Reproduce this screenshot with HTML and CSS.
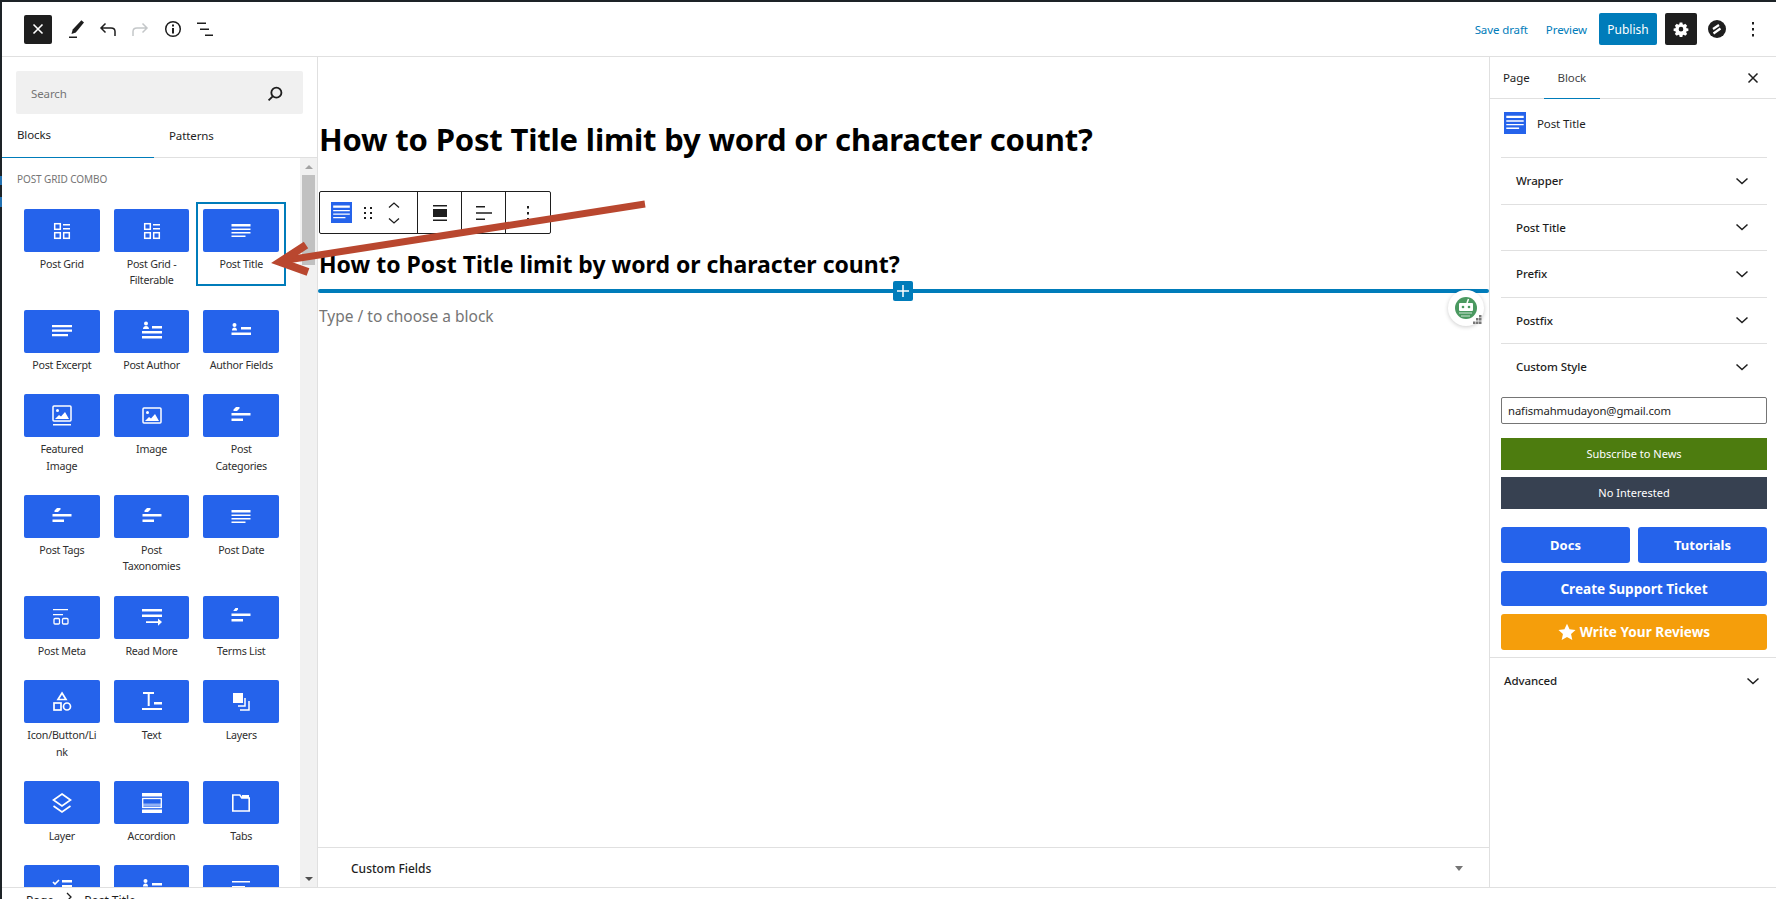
FILE: index.html
```html
<!DOCTYPE html>
<html lang="en">
<head>
  <meta charset="UTF-8" />
  <title>Edit Page</title>
  <link rel="stylesheet" href="styles.css">
</head>
<body>
  <svg class="defs" width="0" height="0">
    <symbol id="i-grid" viewBox="0 0 24 24"><g fill="none" stroke="#fff" stroke-width="1.5"><rect x="4.7" y="4.7" width="5.6" height="5.6"/><rect x="4.7" y="13.7" width="5.6" height="5.6"/><rect x="13.7" y="13.7" width="5.6" height="5.6"/></g><path fill="#fff" d="M13 5h7v1.5h-7zM13 9h7v1.5h-7z"/></symbol>
    <symbol id="i-title" viewBox="0 0 24 24"><path fill="#fff" d="M2.500 5h19v2.500h-19zM2.500 9.500h19v1.500h-19zM2.500 13h19v1.500h-19zM2.500 16.500h14v1.500h-14z"/></symbol>
    <symbol id="i-excerpt" viewBox="0 0 24 24"><path fill="#fff" d="M2 6h20v2.300H2zM2 10.500h20v2.300H2zM2 15h16v2.300H2z"/></symbol>
    <symbol id="i-author" viewBox="0 0 24 24"><circle cx="6" cy="4.500" r="2" fill="#fff"/><path fill="#fff" d="M3 10c0-2 1.500-3 3-3s3 1 3 3zM12 7h10v2.500H12zM2 12h20v2.500H2zM2 17h20v2.500H2z"/></symbol>
    <symbol id="i-fields" viewBox="0 0 24 24"><circle cx="5.500" cy="6" r="2" fill="#fff"/><path fill="#fff" d="M3 11.500c0-2 1-3 2.500-3s2.500 1 2.500 3zM12 8h10v2.500H12zM2.500 13.500h19.500V16H2.500z"/></symbol>
    <symbol id="i-feat" viewBox="0 0 24 24"><rect x="3" y="2" width="18" height="15" rx="1" fill="none" stroke="#fff" stroke-width="1.500"/><circle cx="7.500" cy="6.500" r="1.500" fill="#fff"/><path fill="#fff" d="M5 15l4-4 2 1.500L15 8l4 7zM3 20h18v1.500H3z"/></symbol>
    <symbol id="i-image" viewBox="0 0 24 24"><rect x="3" y="4" width="18" height="15" rx="1" fill="none" stroke="#fff" stroke-width="1.500"/><circle cx="7.500" cy="8.500" r="1.500" fill="#fff"/><path fill="#fff" d="M5 17l4-4 2 1.500L15 10l4 7z"/></symbol>
    <symbol id="i-terms" viewBox="0 0 24 24"><path fill="#fff" d="M4.500 5.500L7 3h3.500v1.500L8 7H4.500zM2.500 9h19v2.500h-19zM2.500 14.500H14V17H2.500z"/></symbol>
    <symbol id="i-meta" viewBox="0 0 24 24"><path fill="#fff" d="M3 4h15v1.300H3zM3 9h10v1.300H3z"/><g fill="none" stroke="#fff" stroke-width="1.300"><rect x="4" y="13.500" width="5.500" height="5.500" rx="1"/><rect x="12.500" y="13.500" width="5.500" height="5.500" rx="1"/></g></symbol>
    <symbol id="i-more" viewBox="0 0 24 24"><path fill="#fff" d="M2 4h20v2.500H2zM2 9.500h20V12H2zM6 16.300h13V18H6z"/><path fill="#fff" d="M18 13.500l4 3.600-4 3.600z"/></symbol>
    <symbol id="i-tlist" viewBox="0 0 24 24"><path fill="#fff" d="M4.500 5.500L6.500 3H9v1.500L7.500 6h-3zM2.500 8.500h19V11h-19zM2.500 14H14v2.500H2.500z"/></symbol>
    <symbol id="i-shapes" viewBox="0 0 24 24"><path fill="none" stroke="#fff" stroke-width="1.700" d="M12 3l4 6.500H8z"/><rect x="4" y="13" width="7" height="7" fill="none" stroke="#fff" stroke-width="1.700"/><circle cx="17" cy="16.500" r="3.500" fill="none" stroke="#fff" stroke-width="1.700"/></symbol>
    <symbol id="i-text" viewBox="0 0 24 24"><path fill="#fff" d="M3 2h11v2H9.700v12H7.700V4H3zM14 12h8v2.500h-8zM2 18h20v2H2z"/></symbol>
    <symbol id="i-layers" viewBox="0 0 24 24"><rect x="4" y="3" width="10" height="10" fill="#fff"/><path fill="none" stroke="#fff" stroke-width="1.500" d="M9 16h7V8M11 20h9V11"/></symbol>
    <symbol id="i-layer" viewBox="0 0 24 24"><path fill="none" stroke="#fff" stroke-width="1.700" d="M12 3l8.500 6-8.500 6-8.500-6zM3.500 15l8.500 6 8.500-6"/></symbol>
    <symbol id="i-accordion" viewBox="0 0 24 24"><path fill="#fff" d="M2 2h20v3.500H2zM2 18.500h20V22H2z"/><rect x="2.700" y="7.500" width="18.600" height="9" fill="none" stroke="#fff" stroke-width="1.300"/><path fill="#fff" fill-opacity=".5" d="M3 12.500h18v3H3z"/></symbol>
    <symbol id="i-tabs" viewBox="0 0 24 24"><path fill="none" stroke="#fff" stroke-width="1.600" d="M3.800 4h7l2 3h7.400v13H3.800z"/><path fill="#fff" d="M13 4h7v3h-7z"/></symbol>
    <symbol id="i-check" viewBox="0 0 24 24"><path fill="none" stroke="#fff" stroke-width="1.700" d="M3 7l2 2 4-4"/><path fill="#fff" d="M12 5h10v2.500H12zM12 10h10v2.500H12z"/><rect x="3.500" y="13" width="5" height="5" fill="none" stroke="#fff" stroke-width="1.300"/></symbol>
    <symbol id="i-short" viewBox="0 0 24 24"><path fill="#fff" d="M3 6h18v1.500H3zM3 11h13v1.500H3zM3 16h8v1.500H3z"/></symbol>
    <symbol id="i-chev" viewBox="0 0 24 24"><path fill="none" stroke="#1e1e1e" stroke-width="1.500" d="M6.500 9.500L12 14.500l5.500-5"/></symbol>
  </svg>

  <i class="menu-tick tick-a"></i>
  <i class="menu-tick tick-b"></i>

  <div class="shell">
    <header class="topbar">
      <div class="top-left">
        <button class="close-btn"><svg width="24" height="24" viewBox="0 0 24 24"><path stroke="#fff" stroke-width="1.600" d="M7.500 7.500l9 9M16.500 7.500l-9 9"/></svg></button>
        <svg class="tool" width="24" height="24" viewBox="0 0 24 24"><path fill="#1e1e1e" d="M20 5.500l-2.600-2.300L8.700 12.500 7.500 17l4.300-1.600z"/><path fill="#1e1e1e" d="M5 19.500h8V21H5z"/></svg>
        <svg class="tool" width="24" height="24" viewBox="0 0 24 24"><path fill="none" stroke="#1e1e1e" stroke-width="1.500" d="M9.500 6.500L5 11l4.500 4.500M5 11h10c2.500 0 4 1.700 4 3.500V19"/></svg>
        <svg class="tool" width="24" height="24" viewBox="0 0 24 24"><path fill="none" stroke="#c4c7c9" stroke-width="1.500" d="M14.500 6.500L19 11l-4.500 4.500M19 11H9c-2.500 0-4 1.700-4 3.500V19"/></svg>
        <svg class="tool" width="24" height="24" viewBox="0 0 24 24"><circle cx="13" cy="12" r="7.300" fill="none" stroke="#1e1e1e" stroke-width="1.500"/><path fill="#1e1e1e" d="M12 11h2v5.500h-2zM12 7.500h2v2h-2z"/></svg>
        <svg class="tool" width="24" height="24" viewBox="0 0 24 24"><path fill="#1e1e1e" d="M5 5.500h9V7H5zM8 11.500h9V13H8zM13 17.500h8V19h-8z"/></svg>
      </div>
      <div class="top-right">
        <a class="link save">Save draft</a>
        <a class="link preview">Preview</a>
        <button class="publish">Publish</button>
        <button class="settings"><svg width="24" height="24" viewBox="0 0 24 24"><path fill="#fff" fill-rule="evenodd" d="M10.300 4h3.400l.4 2.200 1.300.6 1.900-1.300 2.400 2.400-1.300 1.900.6 1.300 2.200.4v3l-2.200.4-.6 1.300 1.300 1.900-2.400 2.400-1.900-1.300-1.300.6-.4 2.100h-3.400l-.4-2.100-1.300-.6-1.900 1.300-2.400-2.400 1.300-1.900-.6-1.300-2.200-.4v-3l2.200-.4.6-1.300-1.300-1.900 2.400-2.400 1.900 1.300 1.300-.6zM12 9.300a2.900 2.900 0 100 5.800 2.900 2.900 0 000-5.800z" transform="translate(2.400 2.400) scale(.8)"/></svg></button>
        <svg class="zig" width="18" height="18" viewBox="0 0 18 18"><circle cx="9" cy="9" r="9" fill="#1e1e1e"/><path fill="none" stroke="#fff" stroke-width="2.200" d="M5 9l6-4M5.500 13.500l7-5"/></svg>
        <svg class="kebab" width="24" height="24" viewBox="0 0 24 24"><path fill="#1e1e1e" d="M11 5h2v2.500h-2zM11 11h2v2.500h-2zM11 17h2v2.500h-2z"/></svg>
      </div>
    </header>

    <div class="workspace">
      <aside class="inserter">
        <div class="search"><span>Search</span><svg width="22" height="22" viewBox="0 0 24 24"><circle cx="13.500" cy="10.500" r="5.500" fill="none" stroke="#1e1e1e" stroke-width="2"/><path stroke="#1e1e1e" stroke-width="2" d="M9.500 14.500L5 19"/></svg></div>
        <div class="ins-tabs">
          <div class="ins-tab active">Blocks</div>
          <div class="ins-tab">Patterns</div>
        </div>
        <div class="ins-body">
          <div class="block-list">
            <div class="cat-title">POST GRID COMBO</div>
            <div class="block-grid">
              <div class="block"><div class="tile"><svg><use href="#i-grid"/></svg></div><span>Post Grid</span></div>
              <div class="block"><div class="tile"><svg><use href="#i-grid"/></svg></div><span>Post Grid - Filterable</span></div>
              <div class="block selected"><div class="tile"><svg><use href="#i-title"/></svg></div><span>Post Title</span></div>
              <div class="block"><div class="tile"><svg><use href="#i-excerpt"/></svg></div><span>Post Excerpt</span></div>
              <div class="block"><div class="tile"><svg><use href="#i-author"/></svg></div><span>Post Author</span></div>
              <div class="block"><div class="tile"><svg><use href="#i-fields"/></svg></div><span>Author Fields</span></div>
              <div class="block"><div class="tile"><svg><use href="#i-feat"/></svg></div><span>Featured Image</span></div>
              <div class="block"><div class="tile"><svg><use href="#i-image"/></svg></div><span>Image</span></div>
              <div class="block"><div class="tile"><svg><use href="#i-terms"/></svg></div><span>Post<br>Categories</span></div>
              <div class="block"><div class="tile"><svg><use href="#i-terms"/></svg></div><span>Post Tags</span></div>
              <div class="block"><div class="tile"><svg><use href="#i-terms"/></svg></div><span>Post Taxonomies</span></div>
              <div class="block"><div class="tile"><svg><use href="#i-title"/></svg></div><span>Post Date</span></div>
              <div class="block"><div class="tile"><svg><use href="#i-meta"/></svg></div><span>Post Meta</span></div>
              <div class="block"><div class="tile"><svg><use href="#i-more"/></svg></div><span>Read More</span></div>
              <div class="block"><div class="tile"><svg><use href="#i-tlist"/></svg></div><span>Terms List</span></div>
              <div class="block"><div class="tile"><svg><use href="#i-shapes"/></svg></div><span>Icon/Button/Li<br>nk</span></div>
              <div class="block"><div class="tile"><svg><use href="#i-text"/></svg></div><span>Text</span></div>
              <div class="block"><div class="tile"><svg><use href="#i-layers"/></svg></div><span>Layers</span></div>
              <div class="block"><div class="tile"><svg><use href="#i-layer"/></svg></div><span>Layer</span></div>
              <div class="block"><div class="tile"><svg><use href="#i-accordion"/></svg></div><span>Accordion</span></div>
              <div class="block"><div class="tile"><svg><use href="#i-tabs"/></svg></div><span>Tabs</span></div>
              <div class="block"><div class="tile"><svg><use href="#i-check"/></svg></div></div>
              <div class="block"><div class="tile"><svg><use href="#i-fields"/></svg></div></div>
              <div class="block"><div class="tile"><svg><use href="#i-short"/></svg></div></div>
            </div>
          </div>
          <div class="scrollbar">
            <div class="arrow-up"></div>
            <div class="thumb"></div>
            <div class="arrow-down"></div>
          </div>
        </div>
      </aside>

      <main class="canvas">
        <div class="editor">
          <h1 class="page-title">How to Post Title limit by word or character count?</h1>
          <div class="block-toolbar">
            <div class="tb-group first">
              <svg class="tb-icon" width="21" height="21" viewBox="0 0 24 24"><rect width="24" height="24" fill="#2563eb"/><path fill="#fff" d="M2.500 4h19v2.500h-19zM2.500 9h19v1.500h-19zM2.500 13h19v1.500h-19zM2.500 17h14v1.500h-14z"/></svg>
              <svg class="tb-drag" width="8" height="14" viewBox="0 0 8 14"><path fill="#1e1e1e" d="M0 1h2v2H0zM6 1h2v2H6zM0 6h2v2H0zM6 6h2v2H6zM0 11h2v2H0zM6 11h2v2H6z"/></svg>
              <svg class="tb-mover" width="14" height="26" viewBox="0 0 14 26"><path fill="none" stroke="#1e1e1e" stroke-width="1.300" d="M2 7.500L7 3l5 4.500M2 18.500l5 4.500 5-4.500"/></svg>
            </div>
            <div class="tb-group"><svg width="24" height="24" viewBox="0 0 24 24"><path fill="#1e1e1e" d="M5 4h14v1.500H5zM5 8h14v8H5zM5 18.500h14V20H5z"/></svg></div>
            <div class="tb-group"><svg width="24" height="24" viewBox="0 0 24 24"><path fill="#1e1e1e" d="M4 5h9v1.500H4zM4 11.200h16v1.500H4zM4 17.500h9V19H4z"/></svg></div>
            <div class="tb-group last"><svg width="24" height="24" viewBox="0 0 24 24"><path fill="#1e1e1e" d="M11 5h2v2.500h-2zM11 11h2v2.500h-2zM11 17h2v2.500h-2z"/></svg></div>
          </div>
          <h2 class="post-title">How to Post Title limit by word or character count?</h2>
          <div class="insert-line"><button class="insert-plus"><svg width="14" height="14" viewBox="0 0 14 14"><path stroke="#fff" stroke-width="1.500" d="M7 1v12M1 7h12"/></svg></button></div>
          <p class="placeholder">Type / to choose a block</p>
          <div class="bot">
            <svg width="24" height="24" viewBox="0 0 24 24"><circle cx="12" cy="12" r="11" fill="#4a9960"/><path stroke="#fff" stroke-width="1.500" d="M13 7l1.500-4"/><rect x="5" y="7" width="14" height="8" rx="1" fill="#fff"/><circle cx="9" cy="11" r="1.300" fill="#4a9960"/><circle cx="15" cy="11" r="1.300" fill="#4a9960"/><path stroke="#cfe6d6" stroke-width="1.200" d="M5 17h13M7 20h9"/></svg>
            <svg class="bot-grip" width="9" height="9" viewBox="0 0 9 9"><path fill="#777" d="M6 0h2.500v2.500H6zM3 3h2.500v2.500H3zM6 3h2.500v2.500H6zM0 6.500h2.500V9H0zM3 6.500h2.500V9H3zM6 6.500h2.500V9H6z"/></svg>
          </div>
        </div>
        <div class="meta-bar"><span>Custom Fields</span><i class="meta-caret"></i></div>
      </main>

      <aside class="sidebar">
        <div class="side-tabs">
          <div class="side-tab">Page</div>
          <div class="side-tab active">Block</div>
          <svg class="side-close" width="24" height="24" viewBox="0 0 24 24"><path stroke="#1e1e1e" stroke-width="1.500" d="M7.500 7.500l9 9M16.500 7.500l-9 9"/></svg>
        </div>
        <div class="block-card">
          <svg width="22" height="22" viewBox="0 0 24 24"><rect width="24" height="24" fill="#2563eb"/><path fill="#fff" d="M2.500 4h19v2.500h-19zM2.500 9h19v1.500h-19zM2.500 13h19v1.500h-19zM2.500 17h14v1.500h-14z"/></svg>
          <span>Post Title</span>
        </div>
        <div class="side-inner">
          <div class="acc"><span>Wrapper</span><svg width="24" height="24"><use href="#i-chev"/></svg></div>
          <div class="acc"><span>Post Title</span><svg width="24" height="24"><use href="#i-chev"/></svg></div>
          <div class="acc"><span>Prefix</span><svg width="24" height="24"><use href="#i-chev"/></svg></div>
          <div class="acc"><span>Postfix</span><svg width="24" height="24"><use href="#i-chev"/></svg></div>
          <div class="acc"><span>Custom Style</span><svg width="24" height="24"><use href="#i-chev"/></svg></div>
          <input class="email" type="text" value="nafismahmudayon@gmail.com" />
          <button class="flat green">Subscribe to News</button>
          <button class="flat slate">No Interested</button>
          <div class="btn-row">
            <button class="big blue">Docs</button>
            <button class="big blue">Tutorials</button>
          </div>
          <button class="big blue wide">Create Support Ticket</button>
          <button class="big amber">
            <svg width="18" height="18" viewBox="0 0 24 24"><path fill="#fff" d="M12 1l3.400 7.400 8 .9-6 5.400 1.700 8L12 18.700l-7.100 4 1.700-8-6-5.400 8-.9z"/></svg>
            Write Your Reviews
          </button>
        </div>
        <div class="advanced"><span>Advanced</span><svg width="24" height="24"><use href="#i-chev"/></svg></div>
      </aside>
    </div>

    <footer class="crumbs"><span>Page</span><svg width="10" height="10" viewBox="0 0 10 10"><path fill="none" stroke="#1e1e1e" stroke-width="1.300" d="M3 1l4 4-4 4"/></svg><span>Post Title</span></footer>
  </div>

  <svg class="callout" width="400" height="90" viewBox="0 0 400 90">
    <path fill="none" stroke="#b9472f" stroke-width="7" d="M383 6L25 62"/>
    <path fill="none" stroke="#b9472f" stroke-width="8" d="M44 47L18 64l28 10"/>
  </svg>
</body>
</html>
```

FILE: styles.css
```css
* {
  box-sizing: border-box;
}
html, body {
  margin: 0;
  height: 100%;
  overflow: hidden;
}
body {
  position: relative;
  background: #1d2327;
  font-family: "Noto Sans", sans-serif;
  font-size: 11.5px;
  letter-spacing: -0.1px;
  color: #1e1e1e;
}
button {
  font-family: inherit;
  border: 0;
  cursor: pointer;
}
.defs {
  position: absolute;
}
.menu-tick {
  position: absolute;
  left: 0;
  width: 2px;
  background: #2271b1;
}
.tick-a {
  top: 176px;
  height: 9px;
}
.tick-b {
  top: 197px;
  height: 10px;
}
.shell {
  display: flex;
  flex-direction: column;
  height: 897px;
  margin: 2px 0 0 2px;
  background: #fff;
}

/* top bar */
.topbar {
  display: flex;
  justify-content: space-between;
  align-items: center;
  flex: none;
  height: 55px;
  border-bottom: 1px solid #e0e0e0;
}
.top-left, .top-right {
  display: flex;
  align-items: center;
}
.top-left {
  padding-left: 22px;
}
.close-btn {
  display: flex;
  align-items: center;
  justify-content: center;
  width: 28px;
  height: 29px;
  padding: 0;
  margin-right: 12px;
  background: #1e1e1e;
  border-radius: 2px;
}
.tool {
  margin-right: 8px;
}
.link {
  color: #007cba;
}
.save {
  margin-right: 18px;
}
.preview {
  margin-right: 12px;
}
.publish {
  width: 58px;
  height: 32px;
  margin-right: 8px;
  padding: 0;
  background: #007cba;
  color: #fff;
  font-size: 12px;
  border-radius: 2px;
}
.settings {
  display: flex;
  align-items: center;
  justify-content: center;
  width: 32px;
  height: 32px;
  margin-right: 11px;
  padding: 0;
  background: #1e1e1e;
  border-radius: 2px;
}
.kebab {
  margin: 0 11px 0 15px;
}

/* main row */
.workspace {
  display: flex;
  flex: 1;
  min-height: 0;
}
.inserter {
  display: flex;
  flex-direction: column;
  flex: none;
  width: 316px;
  border-right: 1px solid #e0e0e0;
}
.search {
  display: flex;
  justify-content: space-between;
  align-items: center;
  flex: none;
  height: 43px;
  margin: 14px 14px 0;
  padding: 2px 17px 0 15px;
  background: #f0f0f0;
  border-radius: 2px;
  color: #757575;
}
.ins-tabs {
  display: flex;
  flex: none;
  height: 44px;
  border-bottom: 1px solid #e0e0e0;
}
.ins-tab {
  display: flex;
  align-items: center;
  width: 152px;
  padding: 0 0 2px 15px;
  margin-bottom: -1px;
}
.ins-tab.active {
  border-bottom: 1px solid #007cba;
}
.ins-body {
  display: flex;
  flex: 1;
  min-height: 0;
}
.block-list {
  flex: 1;
  overflow: hidden;
  padding: 0 0 0 15px;
}
.cat-title {
  height: 44px;
  padding: 14px 0 0;
  font-size: 10px;
  color: #757575;
  line-height: 14px;
}
.block-grid {
  display: grid;
  grid-template-columns: repeat(3, 89.7px);
  align-items: start;
}
.block {
  padding: 7px 7px 14px;
  text-align: center;
  font-size: 10.7px;
  letter-spacing: -0.25px;
  line-height: 16.4px;
  color: #2f2f2f;
}
.block.selected {
  outline: 2px solid #007cba;
  outline-offset: -2px;
}
.tile {
  display: flex;
  align-items: center;
  justify-content: center;
  height: 43px;
  margin-bottom: 4px;
  background: #2563eb;
  border-radius: 2px;
}
.tile svg {
  width: 24px;
  height: 24px;
}
.scrollbar {
  position: relative;
  flex: none;
  width: 17px;
  background: #f1f1f1;
}
.thumb {
  width: 13px;
  height: 90px;
  margin: 17px 0 0 2px;
  background: #c1c1c1;
}
.arrow-up, .arrow-down {
  position: absolute;
  left: 5px;
  border-left: 4px solid transparent;
  border-right: 4px solid transparent;
}
.arrow-up {
  top: 7px;
  border-bottom: 4px solid #a3a3a3;
}
.arrow-down {
  bottom: 6px;
  border-top: 4px solid #505050;
}

/* canvas */
.canvas {
  display: flex;
  flex-direction: column;
  flex: 1;
  min-width: 0;
}
.editor {
  position: relative;
  flex: 1;
}
.page-title {
  margin: 60px 0 0 1px;
  font-size: 31px;
  letter-spacing: -0.18px;
  line-height: 44px;
  font-weight: 700;
  color: #000;
}
.block-toolbar {
  display: flex;
  width: 232px;
  height: 43px;
  margin: 30px 0 0 1px;
  border: 1px solid #1e1e1e;
  border-radius: 2px;
}
.tb-group {
  display: flex;
  align-items: center;
  justify-content: center;
  width: 44px;
  border-left: 1px solid #1e1e1e;
}
.tb-group.first {
  justify-content: flex-start;
  width: 97px;
  padding-left: 11px;
  border-left: 0;
}
.tb-group.last {
  flex: 1;
}
.tb-drag {
  margin-left: 12px;
}
.tb-mover {
  margin-left: 15px;
}
.post-title {
  margin: 14px 0 0 1px;
  font-size: 23px;
  letter-spacing: 0;
  line-height: 32px;
  font-weight: 700;
  color: #000;
}
.insert-line {
  position: relative;
  height: 4px;
  margin-top: 9px;
  background: #007cba;
  border-radius: 2px;
}
.insert-plus {
  position: absolute;
  left: 575px;
  top: -8px;
  display: flex;
  align-items: center;
  justify-content: center;
  width: 20px;
  height: 20px;
  padding: 0;
  background: #007cba;
  border-radius: 2px;
}
.placeholder {
  margin: 10px 0 0 1px;
  font-size: 15.5px;
  letter-spacing: 0;
  line-height: 26px;
  color: #757575;
}
.bot {
  position: absolute;
  right: 5px;
  top: 233px;
  display: flex;
  align-items: center;
  justify-content: center;
  width: 36px;
  height: 36px;
  background: #fff;
  border-radius: 50%;
  box-shadow: 0 1px 4px rgba(0,0,0,0.2);
}
.bot-grip {
  position: absolute;
  right: 2px;
  bottom: 2px;
}
.meta-bar {
  display: flex;
  justify-content: space-between;
  align-items: center;
  flex: none;
  height: 40px;
  padding: 2px 26px 0 33px;
  border-top: 1px solid #e0e0e0;
  font-size: 12px;
  letter-spacing: 0;
  font-weight: 500;
}
.meta-caret {
  border-left: 4px solid transparent;
  border-right: 4px solid transparent;
  border-top: 5px solid #757575;
}

/* sidebar */
.sidebar {
  flex: none;
  width: 287px;
  border-left: 1px solid #e0e0e0;
}
.side-tabs {
  display: flex;
  align-items: center;
  height: 42px;
  border-bottom: 1px solid #e0e0e0;
  padding-left: 13px;
  position: relative;
}
.side-tab {
  margin-right: 27px;
  line-height: 41px;
}
.side-tab.active {
  margin: 0 0 -1px;
  padding: 0 14px;
  margin-left: -13px;
  border-bottom: 1px solid #007cba;
  color: #444;
}
.side-close {
  margin-left: auto;
  margin-right: 11px;
}
.block-card {
  display: flex;
  align-items: center;
  gap: 11px;
  height: 58px;
  padding: 0 0 10px 14px;
}
.side-inner {
  padding: 0 9px 7px 11px;
  border-bottom: 1px solid #e0e0e0;
}
.acc {
  display: flex;
  justify-content: space-between;
  align-items: center;
  height: 46.500px;
  padding: 0 13px 0 15px;
  border-top: 1px solid #e0e0e0;
  font-weight: 500;
}
.email {
  display: block;
  width: 100%;
  height: 27px;
  margin-top: 7px;
  padding: 0 6px;
  border: 1px solid #757575;
  border-radius: 2px;
  font-family: inherit;
  font-size: 11.3px;
  letter-spacing: -0.1px;
  color: #1e1e1e;
}
.flat {
  display: block;
  width: 100%;
  height: 32px;
  padding: 0;
  margin-top: 7px;
  color: #fff;
  font-size: 11px;
  letter-spacing: 0;
}
.flat.green {
  margin-top: 14px;
  background: #4d7c0f;
}
.flat.slate {
  background: #374151;
}
.btn-row {
  display: flex;
  gap: 8px;
  margin-top: 18px;
}
.big {
  display: flex;
  align-items: center;
  justify-content: center;
  gap: 4px;
  flex: 1;
  width: 100%;
  height: 36px;
  padding: 0;
  color: #fff;
  font-size: 13px;
  letter-spacing: 0;
  font-weight: 700;
  border-radius: 3px;
}
.big.blue {
  background: #2563eb;
}
.big.wide {
  height: 35px;
  margin-top: 8px;
  font-size: 13.6px;
}
.big.amber {
  margin-top: 8px;
  background: #f59e0b;
  font-size: 13.6px;
}
.advanced {
  display: flex;
  justify-content: space-between;
  align-items: center;
  height: 46px;
  padding: 0 11px 0 14px;
  font-weight: 500;
}

/* breadcrumb, mostly below the fold */
.crumbs {
  display: flex;
  align-items: flex-start;
  gap: 10px;
  flex: none;
  height: 30px;
  padding: 4px 0 0 24px;
  border-top: 1px solid #e0e0e0;
  margin-bottom: -18px;
  font-size: 12px;
  letter-spacing: 0;
}

/* annotation drawn on top of the screenshot */
.callout {
  position: absolute;
  left: 262px;
  top: 198px;
  pointer-events: none;
}
```
